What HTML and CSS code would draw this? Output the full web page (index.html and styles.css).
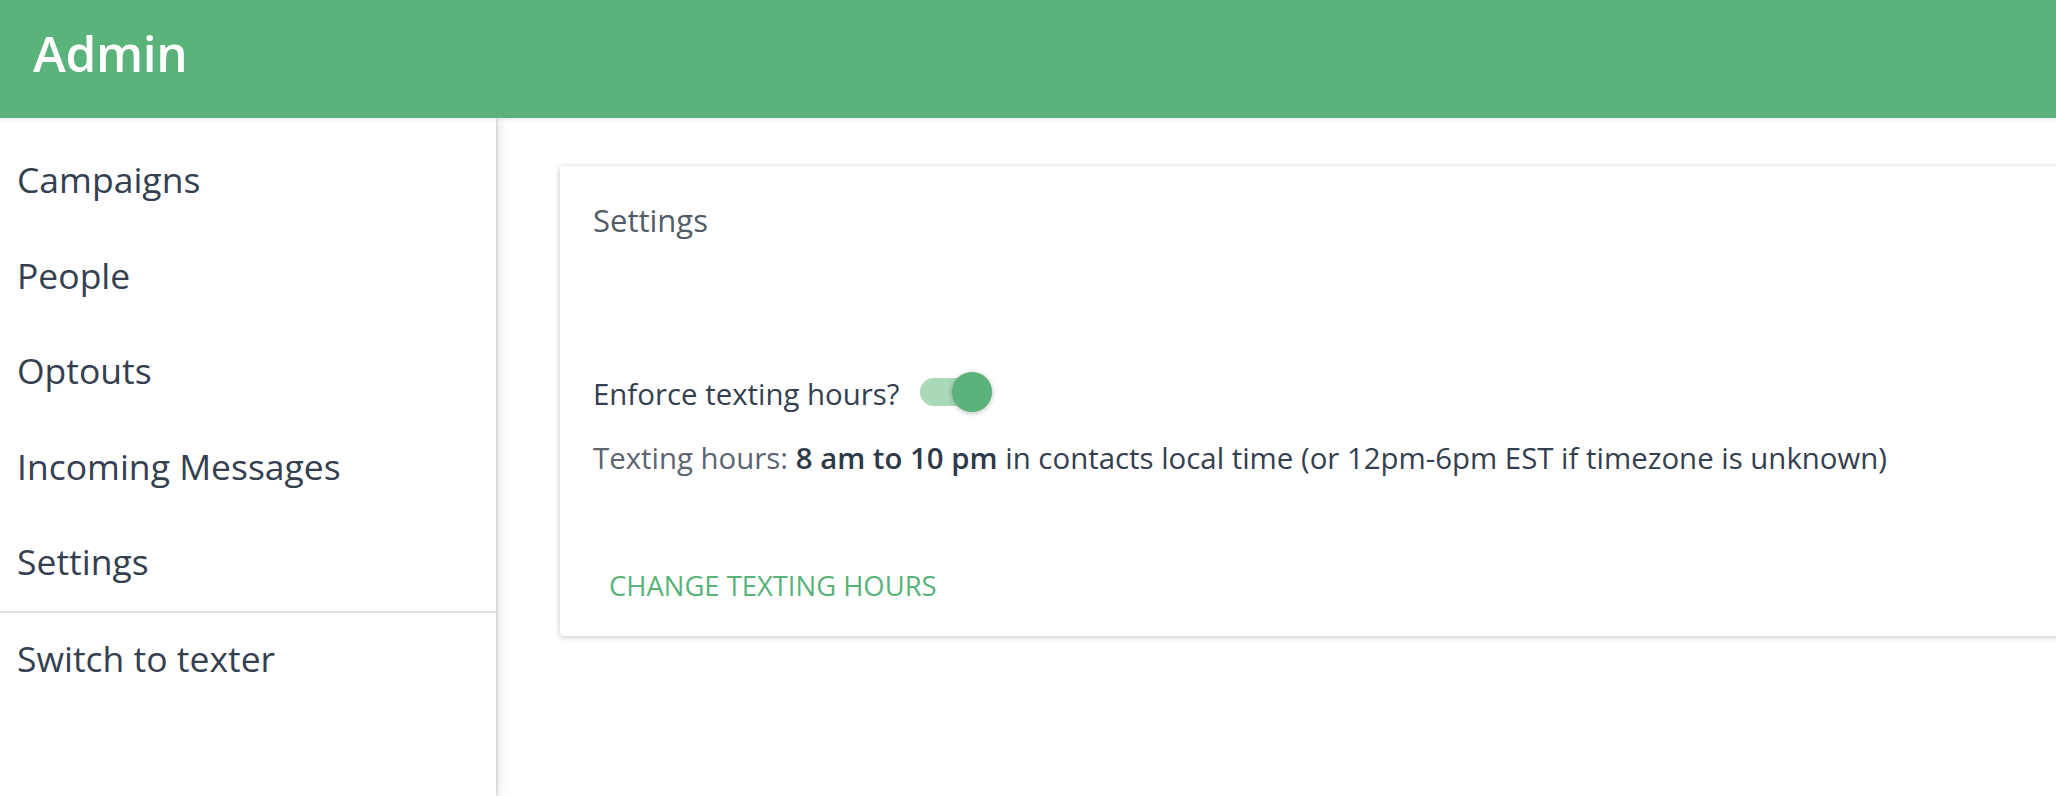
FILE: index.html
```html
<!DOCTYPE html>
<html lang="en">
<head>
<meta charset="utf-8">
<title>Admin</title>
<link rel="stylesheet" href="styles.css">
</head>
<body>
<div class="app">
  <header class="appbar">
    <h1 class="appbar-title">Admin</h1>
  </header>
  <div class="layout">
    <nav class="sidebar">
      <ul class="menu menu-main">
        <li class="menu-item">Campaigns</li>
        <li class="menu-item">People</li>
        <li class="menu-item">Optouts</li>
        <li class="menu-item">Incoming Messages</li>
        <li class="menu-item">Settings</li>
      </ul>
      <hr class="divider">
      <ul class="menu menu-secondary">
        <li class="menu-item">Switch to texter</li>
      </ul>
    </nav>
    <main class="content">
      <section class="card">
        <h2 class="card-title">Settings</h2>
        <div class="toggle-row">
          <span class="toggle-label">Enforce texting hours?</span>
          <span class="toggle" role="switch" aria-checked="true">
            <span class="toggle-track"></span>
            <span class="toggle-thumb"></span>
          </span>
        </div>
        <p class="hours"><span class="hours-label">Texting hours:</span> <span class="hours-range">8 am to 10 pm</span> in contacts local time (or 12pm-6pm EST if timezone is unknown)</p>
        <div class="card-actions">
          <button class="btn-flat" type="button">Change texting hours</button>
        </div>
      </section>
    </main>
  </div>
</div>
</body>
</html>
```

FILE: styles.css
```css
* {
  box-sizing: border-box;
}

html, body {
  margin: 0;
  padding: 0;
  height: 100%;
  overflow: hidden;
  background: #ffffff;
}

body {
  font-family: "Open Sans", "Noto Sans", sans-serif;
  color: #344050;
}

.app {
  display: flex;
  flex-direction: column;
  height: 100%;
}

.appbar {
  flex: 0 0 118px;
  height: 118px;
  background: #59b37a;
  padding: 18.5px 33px 0;
  position: relative;
  z-index: 2;
  box-shadow: 0 1px 4px rgba(0, 0, 0, 0.12);
}

.appbar-title {
  margin: 0;
  font-size: 49.5px;
  font-weight: 600;
  line-height: normal;
  color: #ffffff;
  letter-spacing: -0.3px;
}

.layout {
  flex: 1;
  display: flex;
  min-height: 0;
}

.sidebar {
  flex: 0 0 496px;
  width: 496px;
  background: #ffffff;
  position: relative;
  z-index: 1;
  box-shadow: 1px 0 3px rgba(0, 0, 0, 0.14), 2px 0 12px rgba(0, 0, 0, 0.12);
}

.menu {
  list-style: none;
  margin: 0;
  padding: 0;
}

.menu-main {
  padding-top: 15px;
}

.menu-item {
  height: 95.5px;
  display: flex;
  align-items: center;
  padding: 0 17px 2.6px;
  font-size: 35.5px;
  line-height: normal;
  color: #344050;
}

.menu-secondary .menu-item {
  height: 95.5px;
  padding-bottom: 3.6px;
}

.divider {
  margin: 0;
  border: 0;
  height: 2px;
  background: #e0e0e0;
}

.content {
  flex: 1;
  min-width: 0;
  padding: 48px 0 0 64px;
}

.card {
  margin-right: -80px;
  background: #ffffff;
  border-radius: 4px;
  padding: 33px 33px 22px;
  box-shadow: 0 1px 7px rgba(0, 0, 0, 0.12), 0 1px 5px rgba(0, 0, 0, 0.12);
}

.card-title {
  margin: 0;
  font-size: 31px;
  font-weight: 400;
  line-height: normal;
  color: #525c69;
}

.toggle-row {
  margin-top: 131px;
  display: flex;
  align-items: flex-start;
  height: 40px;
}

.toggle-label {
  font-size: 29.4px;
  line-height: 40px;
  padding-top: 1.6px;
  color: #344050;
}

.toggle {
  position: relative;
  display: inline-block;
  width: 72px;
  height: 40px;
  margin-left: 21px;
}

.toggle-track {
  position: absolute;
  left: 0;
  top: 6px;
  width: 64px;
  height: 28px;
  border-radius: 14px;
  background: #a9d9b9;
}

.toggle-thumb {
  position: absolute;
  right: 0;
  top: 0;
  width: 40px;
  height: 40px;
  border-radius: 50%;
  background: #59b37a;
  box-shadow: 0 1px 6px rgba(0, 0, 0, 0.14), 0 1px 4px rgba(0, 0, 0, 0.14);
}

.hours {
  margin: 25.6px 0 0;
  font-size: 29.4px;
  line-height: 40px;
  color: #344050;
  white-space: nowrap;
}

.hours-label {
  color: #5c6571;
}

.hours-range {
  font-weight: 600;
  color: #2f3a48;
}

.card-actions {
  margin-top: 79px;
}

.btn-flat {
  font-family: inherit;
  font-size: 27.4px;
  line-height: 37.3px;
  font-weight: 400;
  text-transform: uppercase;
  color: #59b37a;
  background: transparent;
  border: 0;
  padding: 10px 16px;
  margin: 0;
  cursor: pointer;
}
```
